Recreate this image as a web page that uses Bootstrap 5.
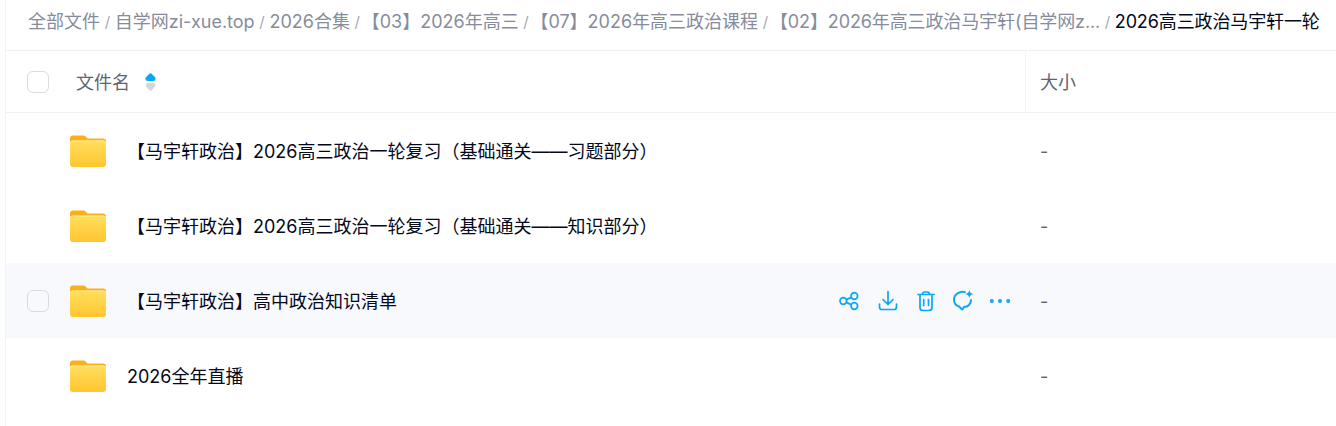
<!DOCTYPE html>
<html lang="zh-CN"><head><meta charset="utf-8"><title>文件</title>
<link rel="stylesheet" href="https://cdn.jsdelivr.net/npm/bootstrap@5.3.0/dist/css/bootstrap.min.css">
<style>
html,body{height:426px;overflow:hidden;background:#fff}
body{font-family:Inter,"Noto Sans CJK SC",sans-serif;font-size:18px;color:#03081a}
.fm-wrap{margin-left:5px;border-left:1px solid #f1f2f4;height:426px}
.crumbs{height:51px;border-bottom:1px solid #f0f1f3;padding-left:22px;white-space:nowrap;overflow:hidden}
.crumbs .breadcrumb{--bs-breadcrumb-margin-bottom:0;--bs-breadcrumb-item-padding-x:4.7px;--bs-breadcrumb-divider-color:#a5a9b3;--bs-breadcrumb-item-active-color:#03081a;flex-wrap:nowrap;line-height:44px;color:#878c9c}
.crumbs .breadcrumb-item::before{font-size:15px}
.crumbs a{color:#878c9c;text-decoration:none}
.crumbs .breadcrumb-item.active{color:#03081a;letter-spacing:-.12px}
.crumbs .tight-item a{margin-left:-3px}
.crumbs .long-crumb a{letter-spacing:-.11px}
.head-row{height:62px;border-bottom:1px solid #f0f1f3;color:#60646f}
.file-row{height:75px}
.file-row.hovered{background:#f7f9fc}
.cell-name{flex:0 0 1020px;display:flex;align-items:center;height:100%;padding-left:21px}
.cell-size{padding-left:14px;flex:1;height:100%;display:flex;align-items:center;color:#60646f}
.file-row .cell-size,.file-title{padding-top:2px}
.head-row .cell-size,.head-label{padding-top:1px}
.head-row .cell-name{border-right:1px solid #f3f4f6}
.tick{width:22px;height:22px;border:1px solid #d9dbe0;border-radius:6px;flex:none}
.tick-gap{width:22px;flex:none}
.head-label{margin-left:27px}
.sorter{margin-left:15px;display:block}
.folder{margin-left:21px;margin-right:21px;flex:none;display:block}
.file-title{white-space:nowrap}
.row-acts{margin-left:auto;margin-right:15px;gap:18px;color:#0ba6f6}
.row-acts svg{display:block;flex:none;overflow:visible}
</style></head><body>
<svg width="0" height="0" class="d-block" style="position:absolute" aria-hidden="true"><defs>
<linearGradient id="fg" x1="0" y1="0" x2="0" y2="1"><stop offset="0" stop-color="#ffdf5e"/><stop offset="1" stop-color="#ffc62f"/></linearGradient>
<symbol id="fold" viewBox="0 0 36 32"><path d="M0 3.5A3 3 0 0 1 3 .5h10c1.500 0 2.300.6 3.200 1.600l1.300 1.400H33a3 3 0 0 1 3 3V12H0z" fill="#fbb019"/><path d="M0 8.500a3 3 0 0 1 3-3h30a3 3 0 0 1 3 3V29a3 3 0 0 1-3 3H3a3 3 0 0 1-3-3z" fill="url(#fg)"/><path d="M0 8.500a3 3 0 0 1 3-3h30a3 3 0 0 1 3 3v.6a3 3 0 0 0-3-2.600H3a3 3 0 0 0-3 2.600z" fill="#ffe992"/></symbol>
</defs></svg>
<div class="fm-wrap">
<nav class="crumbs"><ol class="breadcrumb">
<li class="breadcrumb-item"><a href="#">全部文件</a></li>
<li class="breadcrumb-item"><a href="#">自学网zi-xue.top</a></li>
<li class="breadcrumb-item"><a href="#">2026合集</a></li>
<li class="breadcrumb-item tight-item"><a href="#">【03】2026年高三</a></li>
<li class="breadcrumb-item tight-item"><a href="#">【07】2026年高三政治课程</a></li>
<li class="breadcrumb-item tight-item long-crumb"><a href="#">【02】2026年高三政治马宇轩(自学网z...</a></li>
<li class="breadcrumb-item active">2026高三政治马宇轩一轮</li>
</ol></nav>
<div class="head-row d-flex align-items-center">
<div class="cell-name"><span class="tick"></span><span class="head-label">文件名</span>
<svg class="sorter" width="11" height="18" viewBox="0 0 11 18"><path d="M4.300.7Q5.500-.4 6.700.7L10.300 4.500Q11.500 8 8 8H3Q-.5 8 .7 4.500z" fill="#06a7ff"/><path d="M4.300 17.300Q5.500 18.400 6.700 17.300L10 13.500Q11.200 10 8 10H3Q-.2 10 1 13.500z" fill="#d4d7de"/></svg></div>
<div class="cell-size">大小</div>
</div>
<div class="file-row d-flex align-items-center"><div class="cell-name"><span class="tick-gap"></span><svg class="folder" width="36" height="32"><use href="#fold"/></svg><span class="file-title">【马宇轩政治】2026高三政治一轮复习（基础通关——习题部分）</span></div><div class="cell-size">-</div></div>
<div class="file-row d-flex align-items-center"><div class="cell-name"><span class="tick-gap"></span><svg class="folder" width="36" height="32"><use href="#fold"/></svg><span class="file-title">【马宇轩政治】2026高三政治一轮复习（基础通关——知识部分）</span></div><div class="cell-size">-</div></div>
<div class="file-row hovered d-flex align-items-center"><div class="cell-name"><span class="tick"></span><svg class="folder" width="36" height="32"><use href="#fold"/></svg><span class="file-title">【马宇轩政治】高中政治知识清单</span>
<div class="row-acts d-flex align-items-center">
<svg width="20" height="20" viewBox="0 0 20 20" fill="none" stroke="currentColor" stroke-width="1.700"><circle cx="4.300" cy="10" r="3.300"/><circle cx="15.300" cy="5" r="3.300"/><circle cx="15.300" cy="15" r="3.300"/><path d="M7.300 8.600 12.300 6.400M7.300 11.400l5 2.200"/></svg>
<svg width="20" height="20" viewBox="0 0 20 20" fill="none" stroke="currentColor" stroke-width="1.700" stroke-linecap="round" stroke-linejoin="round"><path d="M11 .5V13.500M6 8.500l5 5 5-5M2.500 13v3A2.500 2.500 0 0 0 5 18.500h12a2.500 2.500 0 0 0 2.500-2.500v-3"/></svg>
<svg width="20" height="20" viewBox="0 0 20 20" fill="none" stroke="currentColor" stroke-width="1.700" stroke-linecap="round" stroke-linejoin="round"><path d="M3 3.500h16M7.500 3.500V3A2.200 2.200 0 0 1 9.700 1h2.600a2.200 2.200 0 0 1 2.200 2v.5M5 3.500V16.500A3 3 0 0 0 8 19.500h6a3 3 0 0 0 3-3V3.500M8.700 8.500V14.500M13.500 8.500V14.500"/></svg>
<svg width="20" height="20" viewBox="0 0 20 20" fill="none" stroke="currentColor" stroke-width="2" stroke-linecap="round" stroke-linejoin="round"><path d="M12 1.100C7 -.1 1 3.300 1 8.500c0 3.300 2 6 5 7l3.300 3 1.700-2.500c4 0 7-3.200 7-7"/><path d="M16.300-1.300c.4 2.700 1.300 3.600 4.200 4.300-2.900.7-3.800 1.600-4.200 4.300-.4-2.700-1.300-3.600-4.200-4.300 2.900-.7 3.800-1.600 4.200-4.300z" fill="currentColor" stroke="none"/></svg>
<svg width="20" height="20" viewBox="0 0 20 20" fill="currentColor"><circle cx=".8" cy="10" r="2"/><circle cx="9" cy="10" r="2"/><circle cx="17.200" cy="10" r="2"/></svg>
</div></div><div class="cell-size">-</div></div>
<div class="file-row d-flex align-items-center"><div class="cell-name"><span class="tick-gap"></span><svg class="folder" width="36" height="32"><use href="#fold"/></svg><span class="file-title">2026全年直播</span></div><div class="cell-size">-</div></div>
</div>
</body></html>
